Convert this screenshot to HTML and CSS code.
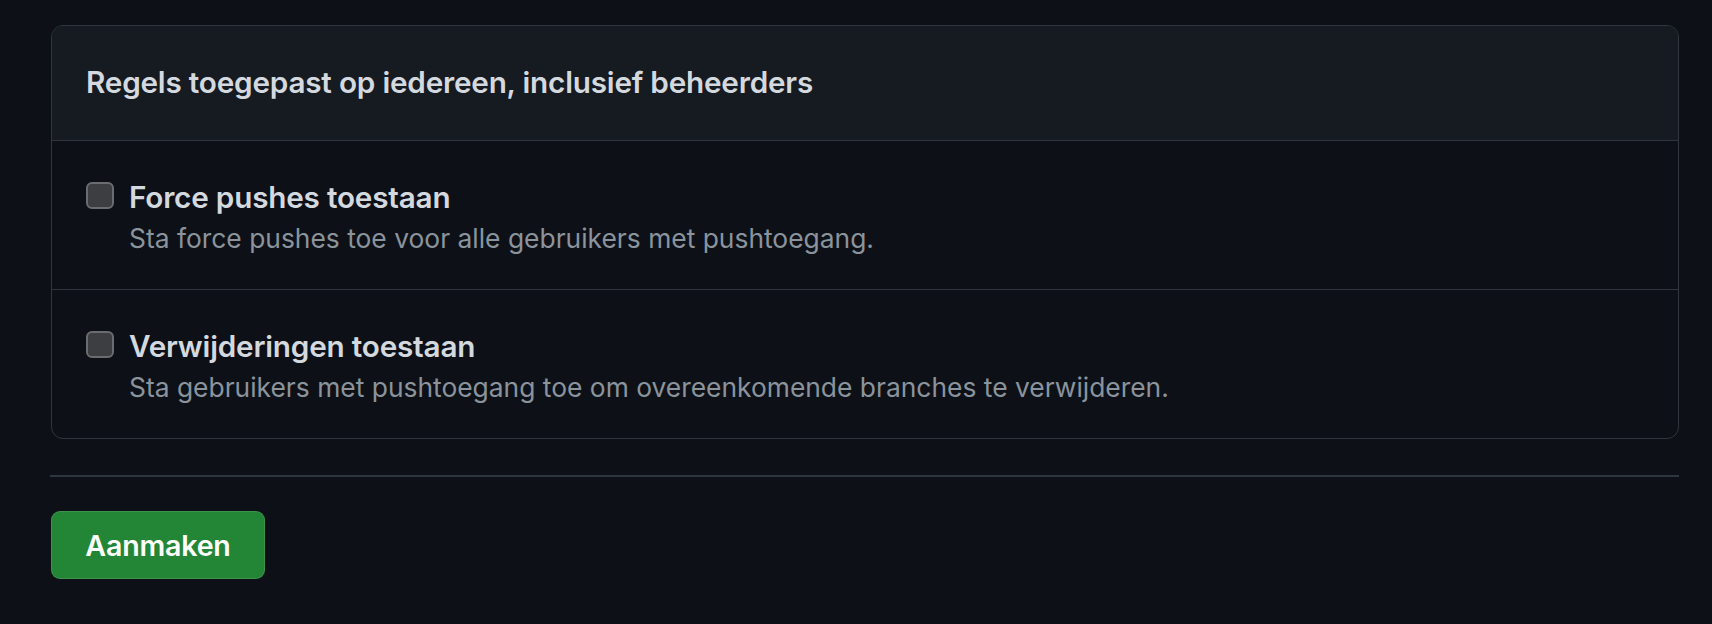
FILE: index.html
```html
<!DOCTYPE html>
<html lang="nl">
<head>
<meta charset="utf-8">
<title>Regels</title>
<link rel="stylesheet" href="styles.css">
</head>
<body>
<main class="page">
  <section class="box">
    <header class="box-header">
      <h2 class="box-title">Regels toegepast op iedereen, inclusief beheerders</h2>
    </header>
    <div class="box-row">
      <label class="check">
        <span class="checkbox"></span>
        <span class="check-text">
          <span class="check-label">Force pushes toestaan</span>
          <span class="check-note">Sta force pushes toe voor alle gebruikers met pushtoegang.</span>
        </span>
      </label>
    </div>
    <div class="box-row">
      <label class="check">
        <span class="checkbox"></span>
        <span class="check-text">
          <span class="check-label">Verwijderingen toestaan</span>
          <span class="check-note">Sta gebruikers met pushtoegang toe om overeenkomende branches te verwijderen.</span>
        </span>
      </label>
    </div>
  </section>
  <hr class="divider">
  <button class="btn-primary" type="button">Aanmaken</button>
</main>
</body>
</html>
```

FILE: styles.css
```css
html, body {
  margin: 0;
  padding: 0;
  background: #0d1117;
  height: 100%;
}
body {
  font-family: Inter, "Noto Sans", "Liberation Sans", sans-serif;
  color: #e6edf3;
  overflow: hidden;
}
.page {
  padding: 25px 33px 0 51px;
}
.box {
  border: 1px solid #30363d;
  border-radius: 12px;
  overflow: hidden;
}
.box-header {
  background: #161b22;
  border-bottom: 1px solid #30363d;
  height: 114px;
  display: flex;
  align-items: center;
  padding: 0 34px;
}
.box-title {
  margin: 0;
  margin-top: -2px;
  font-size: 29.7px;
  font-weight: 600;
  color: #d4d9df;
  letter-spacing: -0.2px;
}
.box-row {
  padding: 38px 34px 0;
  height: 110px;
}
.box-row + .box-row {
  border-top: 1px solid #30363d;
}
.check {
  display: flex;
  gap: 15px;
  align-items: flex-start;
}
.checkbox {
  flex: none;
  width: 24px;
  height: 23px;
  margin-top: 3px;
  background: #3d3e41;
  border: 2px solid #6b6c70;
  border-radius: 6px;
}
.check-text {
  display: flex;
  flex-direction: column;
}
.check-label {
  font-size: 29.7px;
  line-height: 36px;
  font-weight: 600;
  color: #d4d9df;
  letter-spacing: -0.2px;
}
.check-note {
  margin-top: 6px;
  font-size: 26.4px;
  line-height: 34px;
  color: #8b939c;
}
.divider {
  margin: 36px 0 0 -1px;
  border: 0;
  border-top: 2px solid #30363d;
}
.btn-primary {
  margin-top: 34px;
  width: 214px;
  height: 68px;
  background: #238636;
  border: 1px solid rgba(240, 246, 252, 0.12);
  border-radius: 9px;
  color: #ffffff;
  font-family: Inter, "Noto Sans", "Liberation Sans", sans-serif;
  font-size: 28.6px;
  font-weight: 600;
  letter-spacing: -0.2px;
  padding: 0;
}
```
